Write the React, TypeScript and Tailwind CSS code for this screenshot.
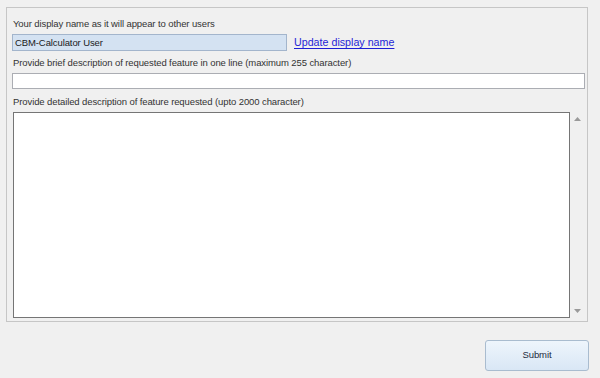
import React from 'react';

const ScrollArrow = ({ down = false }: { down?: boolean }) => (
  <svg width="7" height="4" viewBox="0 0 7 4" className="block">
    {down ? <path d="M0 0 H7 L3.5 4 Z" fill="#9a9a9a" /> : <path d="M0 4 H7 L3.5 0 Z" fill="#9a9a9a" />}
  </svg>
);

const App = () => {
  return (
    <div
      className="w-[600px] h-[378px] bg-[#f0f0f0] flex flex-col pt-[7px] pl-[6px] text-[9.5px] tracking-[-0.1px] text-[#333333]"
      style={{ fontFamily: '"Liberation Sans", Arial, sans-serif' }}
    >
      {/* Feature request panel */}
      <div className="w-[582px] h-[315px] border border-[#c6c6c6] pl-[5px] pr-[2px] flex flex-col">
        <div className="mt-[10px] h-[12px] leading-[12px] ml-[1px]">Your display name as it will appear to other users</div>

        <div className="mt-[4px] h-[17px] flex items-center">
          <div className="w-[275px] h-[17px] bg-[#d4e2f2] border border-[#a3b5cc] pl-[2px] leading-[15px] text-[#1a1a1a]">
            CBM-Calculator User
          </div>
          <a
            href="#"
            className="ml-[7px] text-[10.7px] tracking-[0px] text-[#1f1fd6] underline underline-offset-[2px] leading-[15px]"
          >
            Update display name
          </a>
        </div>

        <div className="mt-[6px] h-[12px] leading-[12px] ml-[1px]">
          Provide brief description of requested feature in one line (maximum 255 character)
        </div>
        <div className="mt-[4px] h-[16px] w-[573px] bg-white border border-[#abadb3]" />

        <div className="mt-[7px] h-[12px] leading-[12px] ml-[1px]">
          Provide detailed description of feature requested (upto 2000 character)
        </div>

        <div className="mt-[4px] h-[206px] flex ml-[1px]">
          <div className="w-[557px] h-full bg-white border border-[#757575]" />
          <div className="w-[15px] h-full flex flex-col items-center justify-between pt-[5px] pb-[5px]">
            <ScrollArrow />
            <ScrollArrow down />
          </div>
        </div>
      </div>

      <div className="flex justify-end mt-[18px] pr-[11px]">
        <button className="w-[104px] h-[31px] rounded-[3px] border border-[#a9bccf] bg-gradient-to-b from-[#eef5fc] to-[#d9e7f5] text-[#1e2b3c] text-[9.5px]">
          Submit
        </button>
      </div>
    </div>
  );
};

export default App;
